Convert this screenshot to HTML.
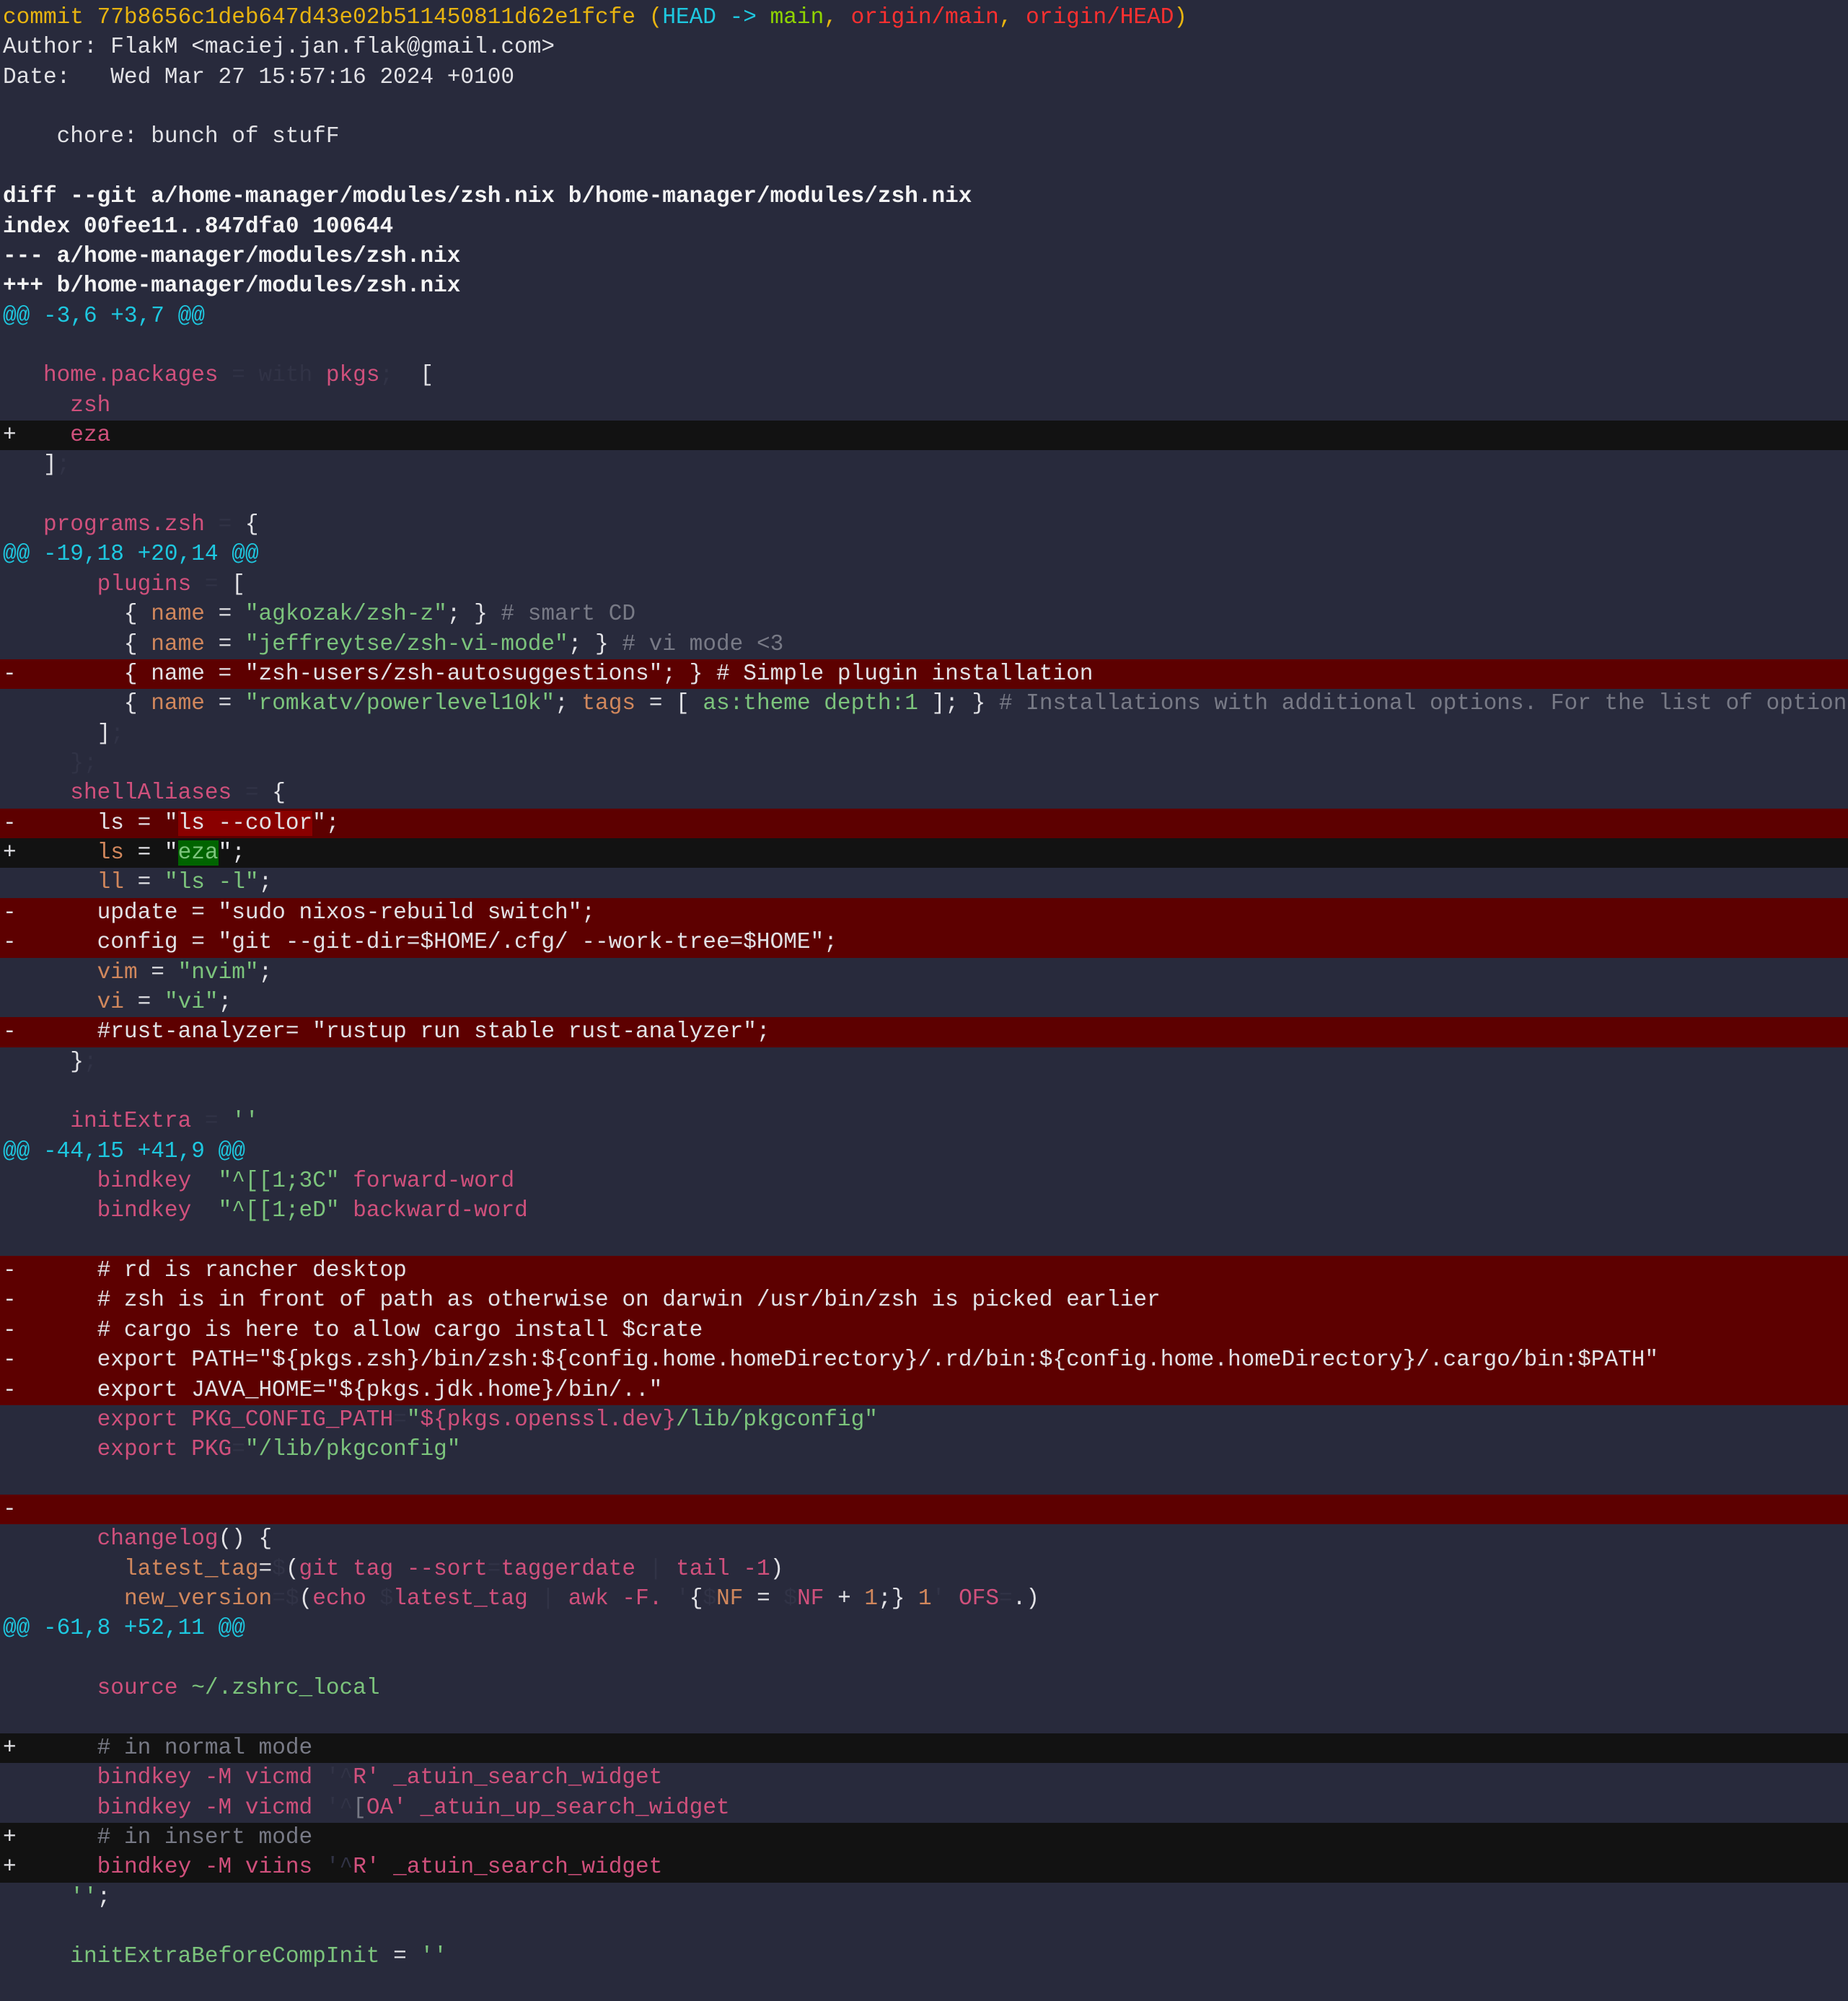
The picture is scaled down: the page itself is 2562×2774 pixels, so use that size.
<!DOCTYPE html>
<html><head><meta charset="utf-8"><style>
html,body{margin:0;padding:0;background:#282a3c;}
body{width:2562px;height:2774px;overflow:hidden;font-family:"Liberation Mono",monospace;font-size:31.1px;color:#e2e2e6;}
#w{padding-top:4px;}
.r{height:41.36px;line-height:41.36px;white-space:pre;padding-left:4px;}
.del{background:#5d0000;}
.add{background:#121212;}
.p{color:#d0507c}.o{color:#d1875c}.g{color:#7cc47c}.c{color:#787a86}.h{color:#313346}
.y{color:#e8b410}.cy{color:#1ec8e0}.lg{color:#8fd400}.rd{color:#ff3030}
.b{font-weight:bold;color:#f4f4f4}
.dh{background:#8a0000}.ah{background:#006400}
</style></head><body><div id="w">
<div class="r"><span class="y">commit 77b8656c1deb647d43e02b511450811d62e1fcfe (</span><span class="cy">HEAD -&gt; </span><span class="lg">main</span><span class="y">, </span><span class="rd">origin/main</span><span class="y">, </span><span class="rd">origin/HEAD</span><span class="y">)</span></div>
<div class="r">Author: FlakM &lt;maciej.jan.flak@gmail.com&gt;</div>
<div class="r">Date:   Wed Mar 27 15:57:16 2024 +0100</div>
<div class="r"> </div>
<div class="r">    chore: bunch of stufF</div>
<div class="r"> </div>
<div class="r b">diff --git a/home-manager/modules/zsh.nix b/home-manager/modules/zsh.nix</div>
<div class="r b">index 00fee11..847dfa0 100644</div>
<div class="r b">--- a/home-manager/modules/zsh.nix</div>
<div class="r b">+++ b/home-manager/modules/zsh.nix</div>
<div class="r cy">@@ -3,6 +3,7 @@</div>
<div class="r"> </div>
<div class="r">   <span class="p">home.packages</span><span class="h"> = with </span><span class="p">pkgs</span><span class="h">; </span> [</div>
<div class="r">     <span class="p">zsh</span></div>
<div class="r add">+    <span class="p">eza</span></div>
<div class="r">   ]<span class="h">;</span></div>
<div class="r"> </div>
<div class="r">   <span class="p">programs.zsh</span><span class="h"> = </span>{</div>
<div class="r cy">@@ -19,18 +20,14 @@</div>
<div class="r">       <span class="p">plugins</span><span class="h"> = </span>[</div>
<div class="r">         { <span class="o">name</span> = <span class="g">"agkozak/zsh-z"</span>; } <span class="c"># smart CD</span></div>
<div class="r">         { <span class="o">name</span> = <span class="g">"jeffreytse/zsh-vi-mode"</span>; } <span class="c"># vi mode &lt;3</span></div>
<div class="r del">-        { name = "zsh-users/zsh-autosuggestions"; } # Simple plugin installation</div>
<div class="r">         { <span class="o">name</span> = <span class="g">"romkatv/powerlevel10k"</span>; <span class="o">tags</span> = [ <span class="g">as:theme depth:1</span> ]; } <span class="c"># Installations with additional options. For the list of options</span></div>
<div class="r">       ]<span class="h">;</span></div>
<div class="r">     <span class="h">};</span></div>
<div class="r">     <span class="p">shellAliases</span><span class="h"> = </span>{</div>
<div class="r del">-      ls = "<span class="dh">ls --color</span>";</div>
<div class="r add">+      <span class="o">ls</span> = "<span class="g ah">eza</span>";</div>
<div class="r">       <span class="o">ll</span> = <span class="g">"ls -l"</span>;</div>
<div class="r del">-      update = "sudo nixos-rebuild switch";</div>
<div class="r del">-      config = "git --git-dir=$HOME/.cfg/ --work-tree=$HOME";</div>
<div class="r">       <span class="o">vim</span> = <span class="g">"nvim"</span>;</div>
<div class="r">       <span class="o">vi</span> = <span class="g">"vi"</span>;</div>
<div class="r del">-      #rust-analyzer= "rustup run stable rust-analyzer";</div>
<div class="r">     }<span class="h">;</span></div>
<div class="r"> </div>
<div class="r">     <span class="p">initExtra</span><span class="h"> = </span><span class="g">''</span></div>
<div class="r cy">@@ -44,15 +41,9 @@</div>
<div class="r">       <span class="p">bindkey</span>  <span class="g">"^[[1;3C"</span> <span class="p">forward-word</span></div>
<div class="r">       <span class="p">bindkey</span>  <span class="g">"^[[1;eD"</span> <span class="p">backward-word</span></div>
<div class="r"> </div>
<div class="r del">-      # rd is rancher desktop</div>
<div class="r del">-      # zsh is in front of path as otherwise on darwin /usr/bin/zsh is picked earlier</div>
<div class="r del">-      # cargo is here to allow cargo install $crate</div>
<div class="r del">-      export PATH="${pkgs.zsh}/bin/zsh:${config.home.homeDirectory}/.rd/bin:${config.home.homeDirectory}/.cargo/bin:$PATH"</div>
<div class="r del">-      export JAVA_HOME="${pkgs.jdk.home}/bin/.."</div>
<div class="r">       <span class="p">export PKG_CONFIG_PATH</span><span class="h">=</span><span class="g">"</span><span class="p">${pkgs.openssl.dev}</span><span class="g">/lib/pkgconfig"</span></div>
<div class="r">       <span class="p">export PKG</span><span class="h">=</span><span class="g">"/lib/pkgconfig"</span></div>
<div class="r"> </div>
<div class="r del">-</div>
<div class="r">       <span class="p">changelog</span>() {</div>
<div class="r">         <span class="o">latest_tag</span>=<span class="h">$</span>(<span class="p">git tag --sort</span><span class="h">=</span><span class="p">taggerdate</span> <span class="h">|</span> <span class="p">tail -1</span>)</div>
<div class="r">         <span class="o">new_version</span><span class="h">=$</span>(<span class="p">echo </span><span class="h">$</span><span class="p">latest_tag</span> <span class="h">|</span> <span class="p">awk -F.</span> <span class="h">'</span>{<span class="h">$</span><span class="o">NF</span> = <span class="h">$</span><span class="p">NF</span> + <span class="o">1</span>;} <span class="o">1</span><span class="h">'</span> <span class="p">OFS</span><span class="h">=</span>.)</div>
<div class="r cy">@@ -61,8 +52,11 @@</div>
<div class="r"> </div>
<div class="r">       <span class="p">source</span> <span class="g">~/.zshrc_local</span></div>
<div class="r"> </div>
<div class="r add">+      <span class="c"># in normal mode</span></div>
<div class="r">       <span class="p">bindkey -M vicmd</span> <span class="h">'^</span><span class="p">R' _atuin_search_widget</span></div>
<div class="r">       <span class="p">bindkey -M vicmd</span> <span class="h">'^</span><span class="c">[</span><span class="p">OA' _atuin_up_search_widget</span></div>
<div class="r add">+      <span class="c"># in insert mode</span></div>
<div class="r add">+      <span class="p">bindkey -M viins</span> <span class="h">'^</span><span class="p">R' _atuin_search_widget</span></div>
<div class="r">     <span class="g">''</span>;</div>
<div class="r"> </div>
<div class="r">     <span class="g">initExtraBeforeCompInit</span> = <span class="g">''</span></div>
</div></body></html>
